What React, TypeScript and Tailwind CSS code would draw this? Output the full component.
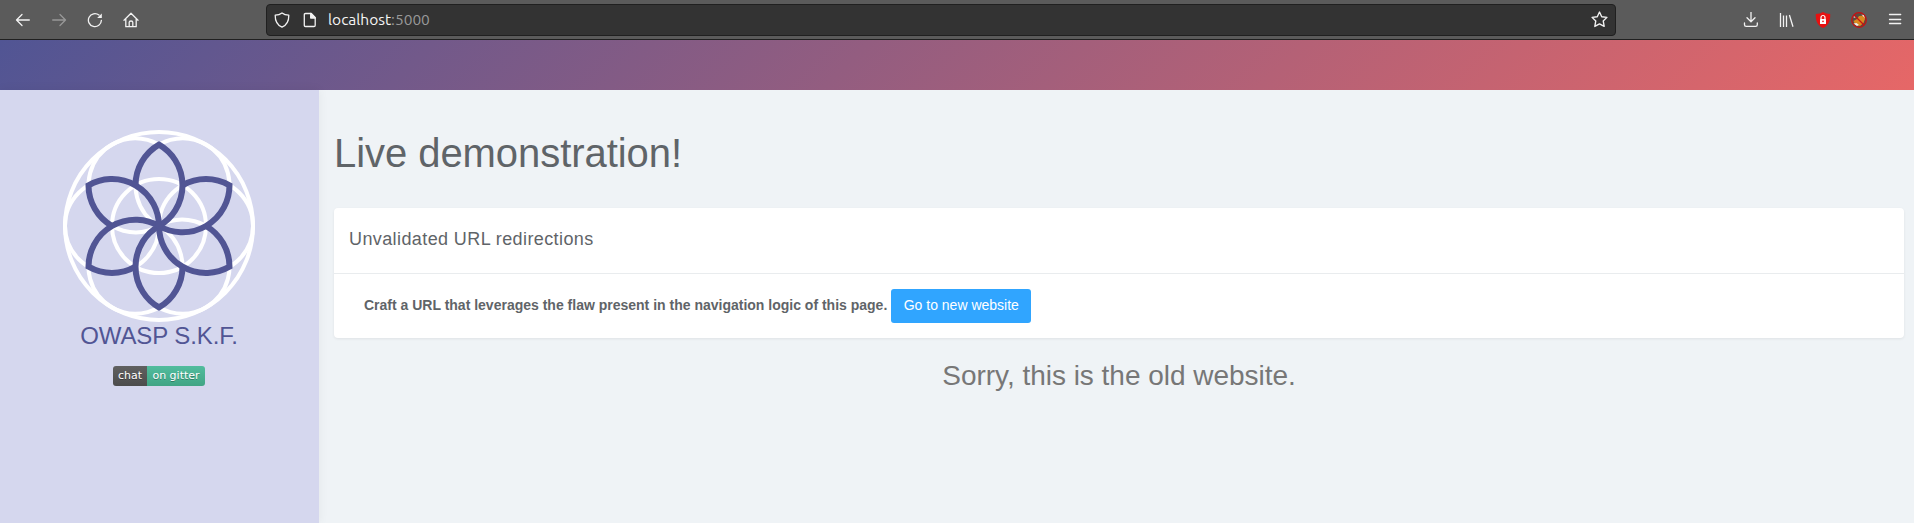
const ROTATIONS = [0, 60, 120, 180, 240, 300];

function Logo() {
  return (
    <svg className="block h-48 w-48" viewBox="-96 -96 192 192" fill="none">
      <g stroke="#fff" strokeWidth="4">
        <circle r="94" />
        <circle r="47" />
        {ROTATIONS.map((a) => (
          <circle key={a} cx="47" r="47" transform={`rotate(${a})`} />
        ))}
      </g>
      <g stroke="#515594" strokeWidth="6" strokeLinejoin="miter">
        {ROTATIONS.map((a) => (
          <path key={a} d="M0 0A47 47 0 0 0 0 -81.4A47 47 0 0 0 -23.5 -40.7" transform={`rotate(${a})`} />
        ))}
      </g>
    </svg>
  );
}

const stroke = { fill: "none", stroke: "#f2f2f2", strokeWidth: 1.3, strokeLinecap: "round", strokeLinejoin: "round" } as const;

function Toolbar() {
  return (
    <header className="flex h-10 shrink-0 items-center border-b border-[#202020] bg-[#5b5b5b]">
      <div className="flex items-center gap-5 pl-[15px]">
        <svg className="h-4 w-4" viewBox="0 0 16 16" {...stroke}><path d="M14.3 8H1.5M7 2.5L1.5 8L7 13.5" /></svg>
        <svg className="h-4 w-4 opacity-40" viewBox="0 0 16 16" {...stroke}><path d="M1.7 8H14.5M9 2.5L14.5 8L9 13.5" /></svg>
        <svg className="h-4 w-4" viewBox="0 0 16 16" {...stroke}>
          <path d="M14.4 8.3A6.5 6.5 0 1 1 12 3.1" />
          <path d="M14.8 1.4V6H10.1Z" fill="#f2f2f2" stroke="none" />
        </svg>
        <svg className="h-4 w-4" viewBox="0 0 16 16" {...stroke}>
          <path d="M1 8.3L8 1.3L15 8.3M2.8 7V14.7H13.2V7M6.2 14.5V10.2Q6.2 9 8 9Q9.8 9 9.8 10.2V14.5" />
        </svg>
      </div>
      <div className="ml-[127px] flex h-8 w-[1350px] items-center rounded border border-[#202020] bg-[#333] pl-[7px] pr-[7px]">
        <svg className="h-4 w-4" viewBox="0 0 16 16" {...stroke}>
          <path d="M8 .9C10 2.4 12 3 14.8 3.2C14.9 8.5 13.5 12.7 8 15.2C2.500 12.7 1.1 8.500 1.2 3.2C4 3 6 2.400 8 .9Z" />
        </svg>
        <svg className="ml-3 h-4 w-4" viewBox="0 0 16 16" {...stroke}>
          <path d="M3.500 1.500H9.300L13.200 5.400V13.300Q13.200 14.500 12 14.500H3.500Q2.300 14.500 2.300 13.300V2.700Q2.300 1.500 3.500 1.500Z" />
          <path d="M8.700 1.500V6H13.200Z" fill="#f2f2f2" />
        </svg>
        <span className="ml-[10px] font-['Ubuntu','Noto_Sans',sans-serif] text-[15.5px] leading-5 text-[#f5f5f5]">
          localhost<span className="text-[#999]">:5000</span>
        </span>
        <svg className="ml-auto h-[17px] w-[17px]" viewBox="0 0 16 16" {...stroke}>
          <path d="M8 1L10.100 5.400L15 6L11.500 9.400L12.400 14.500L8 12.100L3.600 14.500L4.500 9.400L1 6L5.900 5.400Z" />
        </svg>
      </div>
      <div className="ml-auto flex items-center gap-5 pr-[11px]">
        <svg className="h-4 w-4" viewBox="0 0 16 16" {...stroke}><path d="M8 .3V9.500M4 5.800L8 9.800L12 5.800M1.500 11V12.700Q1.500 14.400 3.200 14.400H12.600Q14.300 14.400 14.300 12.700V11" /></svg>
        <svg className="h-4 w-4" viewBox="0 0 16 16" {...stroke} strokeLinecap="butt"><path d="M1.500 1V15M4.500 3.500V15M7.500 3.500V15M10.400 3L14 14.800" /></svg>
        <svg className="h-4 w-4" viewBox="0 0 16 16">
          <path d="M8 0Q11 2 15.200 2C15.500 8 14 13.500 8 16C2 13.500 .5 8 .8 2Q5 2 8 0Z" fill="#e81010" />
          <rect x="5" y="7" width="6" height="5" rx=".5" fill="#fff" />
          <path d="M6 7V5.500A2 2 0 0 1 10 5.500V7" fill="none" stroke="#fff" strokeWidth="1.200" />
          <circle cx="8" cy="9.400" r=".8" fill="#e81010" />
        </svg>
        <svg className="h-4 w-4" viewBox="0 0 16 16">
          <circle cx="8" cy="8" r="7.400" fill="#5c4a40" />
          <path d="M2.500 9L6 7L8 4L13.500 3.500L14 7L12.500 11L9 14L4.500 13Z" fill="#d98a20" />
          <path d="M2 5L4 4L4.500 6ZM2.500 11.500L5.500 11L8 13L6 14ZM10.500 2.500L13 3L13.800 6Z" fill="#eee" />
          <circle cx="8" cy="8" r="7.300" fill="none" stroke="#c80f12" strokeWidth="1.200" />
          <path d="M3 3L13 13" stroke="#c80f12" strokeWidth="1.300" />
        </svg>
        <svg className="h-4 w-4" viewBox="0 0 16 16" {...stroke}><path d="M2.500 2.500H13.700M2.500 7.500H13.700M2.500 11.500H13.700" /></svg>
      </div>
    </header>
  );
}

export default function App() {
  return (
    <div className="flex h-[523px] flex-col overflow-hidden bg-[#eff3f6] font-['Liberation_Sans',Arial,sans-serif]">
      <Toolbar />
      <div className="h-[50px] shrink-0 bg-[linear-gradient(135deg,#515594_0%,#e66767_100%)]" />
      <div className="flex min-h-0 flex-1">
        <aside className="flex w-[319px] shrink-0 flex-col items-center bg-[#d5d7ee] pr-px pt-10 shadow-[0_0_10px_rgba(0,0,0,0.06)]">
          <Logo />
          <div className="text-[24px] leading-[27px] tracking-[-0.1px] text-[#515594]">OWASP S.K.F.</div>
          <div className="mt-[17px] flex h-5 w-[92px] overflow-hidden rounded-[3px] font-['DejaVu_Sans',sans-serif] text-[11px] leading-5 text-white [text-shadow:0_1px_0_rgba(1,1,1,0.3)]">
            <span className="w-[34px] bg-linear-to-b from-[#606060] to-[#4c4c4c] text-center">chat</span>
            <span className="flex-1 bg-linear-to-b from-[#51bc9d] to-[#41a585] text-center">on gitter</span>
          </div>
        </aside>
        <main className="min-w-0 flex-1 pl-[15px] pr-[10px]">
          <h1 className="mt-[39px] text-[40px] leading-[48px] tracking-[-0.06px] text-[#5f6468]">Live demonstration!</h1>
          <section className="mt-[31px] rounded bg-white shadow-[0_1px_3px_rgba(0,0,0,0.07)]">
            <h2 className="flex h-[66px] items-center border-b border-[#e9ecee] px-[15px] pb-0.5 text-[18px] tracking-[0.4px] text-[#5f6468]">
              Unvalidated URL redirections
            </h2>
            <div className="flex h-16 items-center px-[30px]">
              <b className="pb-0.5 text-[14px] text-[#5f6468]">Craft a URL that leverages the flaw present in the navigation logic of this page.</b>
              <button className="ml-1 h-[34px] w-[140px] rounded-[3px] bg-[#30a5ff] pb-0.5 text-[14px] text-white">Go to new website</button>
            </div>
          </section>
          <p className="mt-[20px] text-center text-[28px] leading-[36px] tracking-[-0.03px] text-[#777]">Sorry, this is the old website.</p>
        </main>
      </div>
    </div>
  );
}
